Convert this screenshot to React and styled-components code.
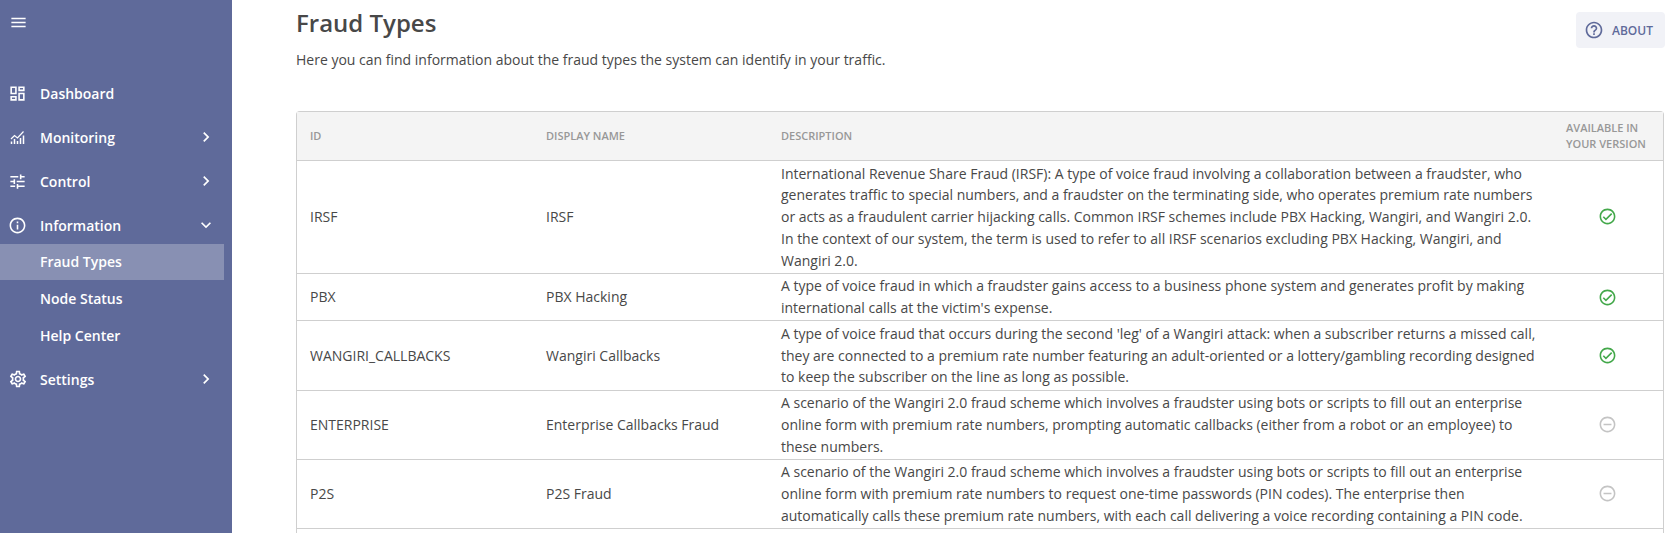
import React from "react";
import styled, { createGlobalStyle } from "styled-components";
import {
  MdOutlineDashboard,
  MdOutlineTune,
  MdOutlineInfo,
  MdOutlineSettings,
  MdMenu,
  MdChevronRight,
  MdExpandMore,
  MdOutlineHelpOutline,
  MdOutlineCheckCircle,
  MdOutlineDoDisturbOn,
} from "react-icons/md";

const GlobalStyle = createGlobalStyle`
  html, body {
    margin: 0;
    height: 100%;
    overflow: hidden;
    background: #fff;
    font-family: "Open Sans", "Noto Sans", sans-serif;
  }
`;

const rows = [
  {
    id: "IRSF",
    name: "IRSF",
    available: true,
    description:
      "International Revenue Share Fraud (IRSF): A type of voice fraud involving a collaboration between a fraudster, who generates traffic to special numbers, and a fraudster on the terminating side, who operates premium rate numbers or acts as a fraudulent carrier hijacking calls. Common IRSF schemes include PBX Hacking, Wangiri, and Wangiri 2.0. In the context of our system, the term is used to refer to all IRSF scenarios excluding PBX Hacking, Wangiri, and Wangiri 2.0.",
  },
  {
    id: "PBX",
    name: "PBX Hacking",
    available: true,
    description:
      "A type of voice fraud in which a fraudster gains access to a business phone system and generates profit by making international calls at the victim's expense.",
  },
  {
    id: "WANGIRI_CALLBACKS",
    name: "Wangiri Callbacks",
    available: true,
    description:
      "A type of voice fraud that occurs during the second 'leg' of a Wangiri attack: when a subscriber returns a missed call, they are connected to a premium rate number featuring an adult-oriented or a lottery/gambling recording designed to keep the subscriber on the line as long as possible.",
  },
  {
    id: "ENTERPRISE",
    name: "Enterprise Callbacks Fraud",
    available: false,
    description:
      "A scenario of the Wangiri 2.0 fraud scheme which involves a fraudster using bots or scripts to fill out an enterprise online form with premium rate numbers, prompting automatic callbacks (either from a robot or an employee) to these numbers.",
  },
  {
    id: "P2S",
    name: "P2S Fraud",
    available: false,
    description:
      "A scenario of the Wangiri 2.0 fraud scheme which involves a fraudster using bots or scripts to fill out an enterprise online form with premium rate numbers to request one-time passwords (PIN codes). The enterprise then automatically calls these premium rate numbers, with each call delivering a voice recording containing a PIN code.",
  },
];

function MonitoringIcon() {
  return (
    <svg width="19" height="19" viewBox="0 0 19 19" fill="none" stroke="currentColor">
      <path d="M3 11l3.5-3.5 3 2.5L15.5 3.5" strokeWidth="1.2" />
      <path d="M3.5 16v-2.5M6.5 16v-5M9.5 16v-3M12.5 16v-6M15.5 16V7.5" strokeWidth="1.5" />
    </svg>
  );
}

export default function App() {
  return (
    <>
      <GlobalStyle />
      <Layout>
        <Sidebar>
          <MenuButton>
            <MdMenu size={19} />
          </MenuButton>
          <Nav>
            <NavItem>
              <NavIcon>
                <MdOutlineDashboard size={19} />
              </NavIcon>
              Dashboard
            </NavItem>
            <NavItem>
              <NavIcon>
                <MonitoringIcon />
              </NavIcon>
              Monitoring
              <Caret>
                <MdChevronRight size={20} />
              </Caret>
            </NavItem>
            <NavItem>
              <NavIcon>
                <MdOutlineTune size={19} />
              </NavIcon>
              Control
              <Caret>
                <MdChevronRight size={20} />
              </Caret>
            </NavItem>
            <NavItem>
              <NavIcon>
                <MdOutlineInfo size={19} />
              </NavIcon>
              Information
              <Caret>
                <MdExpandMore size={20} />
              </Caret>
            </NavItem>
            <SubList>
              <SubItem $active>Fraud Types</SubItem>
              <SubItem>Node Status</SubItem>
              <SubItem>Help Center</SubItem>
            </SubList>
            <NavItem>
              <NavIcon>
                <MdOutlineSettings size={20} />
              </NavIcon>
              Settings
              <Caret>
                <MdChevronRight size={20} />
              </Caret>
            </NavItem>
          </Nav>
        </Sidebar>
        <Main>
          <Header>
            <div>
              <Title>Fraud Types</Title>
              <Subtitle>Here you can find information about the fraud types the system can identify in your traffic.</Subtitle>
            </div>
            <AboutButton>
              <MdOutlineHelpOutline size={20} />
              ABOUT
            </AboutButton>
          </Header>
          <TableWrap>
            <Table>
              <colgroup>
                <col style={{ width: 236 }} />
                <col style={{ width: 235 }} />
                <col />
                <col style={{ width: 110 }} />
              </colgroup>
              <thead>
                <tr>
                  <Th>ID</Th>
                  <Th>DISPLAY NAME</Th>
                  <Th>DESCRIPTION</Th>
                  <Th>
                    AVAILABLE IN
                    <br />
                    YOUR VERSION
                  </Th>
                </tr>
              </thead>
              <tbody>
                {rows.map((row) => (
                  <tr key={row.id}>
                    <Td>{row.id}</Td>
                    <Td>{row.name}</Td>
                    <Td>{row.description}</Td>
                    <StatusCell $available={row.available}>
                      {row.available ? <MdOutlineCheckCircle size={19} /> : <MdOutlineDoDisturbOn size={19} />}
                    </StatusCell>
                  </tr>
                ))}
              </tbody>
            </Table>
          </TableWrap>
        </Main>
      </Layout>
    </>
  );
}

const Layout = styled.div`
  display: flex;
  height: 533px;
  overflow: hidden;
`;

const Sidebar = styled.aside`
  width: 232px;
  flex-shrink: 0;
  background-color: #5f6a9a;
  color: #fff;
  padding-top: 13px;
  box-sizing: border-box;
`;

const MenuButton = styled.div`
  height: 19px;
  padding-left: 9px;
  display: flex;
  align-items: center;
`;

const Nav = styled.nav`
  margin-top: 39px;
  display: flex;
  flex-direction: column;
  width: 224px;
`;

const NavItem = styled.div`
  display: flex;
  align-items: center;
  height: 44px;
  font-size: 14px;
  font-weight: 600;
`;

const NavIcon = styled.span`
  width: 40px;
  padding-left: 8px;
  display: flex;
  align-items: center;
  box-sizing: border-box;
`;

const Caret = styled.span`
  margin-left: auto;
  margin-right: 8px;
  display: flex;
`;

const SubList = styled.div`
  margin: -3px 0 3px;
  display: flex;
  flex-direction: column;
  gap: 1px;
`;

const SubItem = styled.div`
  height: 36px;
  box-sizing: border-box;
  padding: 0 0 2px 40px;
  display: flex;
  align-items: center;
  font-size: 14px;
  font-weight: 600;
  background-color: ${(p) => (p.$active ? "#8890b3" : "transparent")};
`;

const Main = styled.main`
  flex: 1;
  display: flex;
  flex-direction: column;
  padding: 0 9px 0 64px;
  min-width: 0;
`;

const Header = styled.header`
  display: flex;
  flex-shrink: 0;
  justify-content: space-between;
  align-items: flex-start;
  height: 111px;
`;

const Title = styled.h1`
  margin: 7px 0 0;
  font-size: 24px;
  line-height: 32px;
  font-weight: 600;
  color: #484848;
`;

const Subtitle = styled.p`
  margin: 11px 0 0;
  font-size: 14px;
  line-height: 20px;
  color: #484848;
`;

const AboutButton = styled.button`
  margin: 12px -1px 0 0;
  width: 89px;
  height: 36px;
  border: 0;
  border-radius: 4px;
  background-color: #f1f2f7;
  color: #5f6a9a;
  font: 600 12px "Open Sans", sans-serif;
  display: flex;
  align-items: center;
  gap: 8px;
  padding: 0 0 0 8px;
`;

const TableWrap = styled.div`
  flex: 1;
  border: 1px solid #cfcfcf;
  border-bottom: 0;
  border-radius: 4px 4px 0 0;
`;

const Table = styled.table`
  width: 100%;
  table-layout: fixed;
  border-collapse: collapse;
`;

const Th = styled.th`
  height: 48px;
  padding: 0 13px;
  background-color: #f4f4f4;
  border-bottom: 1px solid #cfcfcf;
  text-align: left;
  font-size: 11px;
  line-height: 16px;
  font-weight: 600;
  color: #989898;
`;

const Td = styled.td`
  padding: 1.5px 13px;
  border-bottom: 1px solid #cfcfcf;
  font-size: 14px;
  line-height: 21.75px;
  color: #484848;
`;

const StatusCell = styled(Td)`
  padding-left: 45px;
  color: ${(p) => (p.$available ? "#43a84a" : "#c4c4c4")};
  svg {
    display: block;
  }
`;
